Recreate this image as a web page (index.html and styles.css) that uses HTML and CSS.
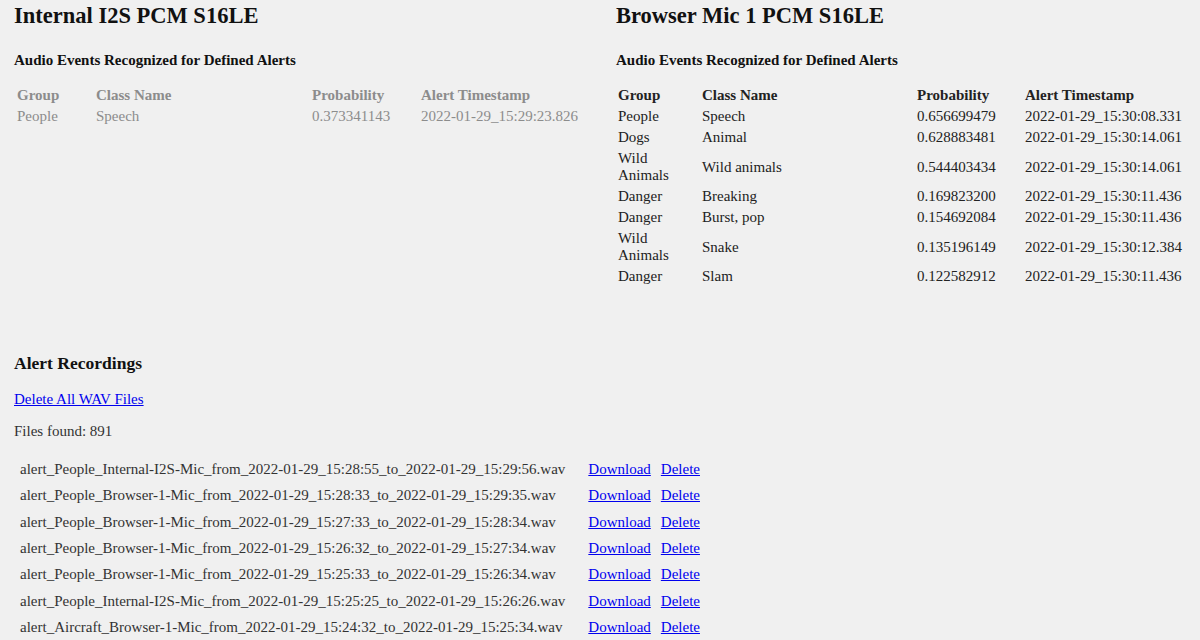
FILE: index.html
```html
<!DOCTYPE html>
<html lang="en">
<head>
<meta charset="utf-8">
<title>Audio Alerts</title>
<link rel="stylesheet" href="styles.css">
</head>
<body>
<div class="page">
  <div class="panels">
    <section class="panel panel-inactive">
      <h2 class="source-title">Internal I2S PCM S16LE</h2>
      <h4 class="section-title">Audio Events Recognized for Defined Alerts</h4>
      <table class="events events-left">
        <thead>
          <tr><th class="c-group">Group</th><th class="c-class">Class Name</th><th class="c-prob">Probability</th><th class="c-ts">Alert Timestamp</th></tr>
        </thead>
        <tbody>
          <tr><td>People</td><td>Speech</td><td>0.373341143</td><td>2022-01-29_15:29:23.826</td></tr>
        </tbody>
      </table>
    </section>
    <section class="panel">
      <h2 class="source-title">Browser Mic 1 PCM S16LE</h2>
      <h4 class="section-title">Audio Events Recognized for Defined Alerts</h4>
      <table class="events events-right">
        <thead>
          <tr><th class="c-group">Group</th><th class="c-class">Class Name</th><th class="c-prob">Probability</th><th class="c-ts">Alert Timestamp</th></tr>
        </thead>
        <tbody>
          <tr><td>People</td><td>Speech</td><td>0.656699479</td><td>2022-01-29_15:30:08.331</td></tr>
          <tr><td>Dogs</td><td>Animal</td><td>0.628883481</td><td>2022-01-29_15:30:14.061</td></tr>
          <tr><td>Wild Animals</td><td>Wild animals</td><td>0.544403434</td><td>2022-01-29_15:30:14.061</td></tr>
          <tr><td>Danger</td><td>Breaking</td><td>0.169823200</td><td>2022-01-29_15:30:11.436</td></tr>
          <tr><td>Danger</td><td>Burst, pop</td><td>0.154692084</td><td>2022-01-29_15:30:11.436</td></tr>
          <tr><td>Wild Animals</td><td>Snake</td><td>0.135196149</td><td>2022-01-29_15:30:12.384</td></tr>
          <tr><td>Danger</td><td>Slam</td><td>0.122582912</td><td>2022-01-29_15:30:11.436</td></tr>
        </tbody>
      </table>
    </section>
  </div>

  <section class="recordings">
    <h3 class="rec-title">Alert Recordings</h3>
    <p class="rec-line"><a href="#">Delete All WAV Files</a></p>
    <p class="rec-line rec-count">Files found: 891</p>
    <table class="files">
      <tbody>
        <tr><td class="f-name">alert_People_Internal-I2S-Mic_from_2022-01-29_15:28:55_to_2022-01-29_15:29:56.wav</td><td class="f-dl"><a href="#">Download</a></td><td class="f-del"><a href="#">Delete</a></td></tr>
        <tr><td class="f-name">alert_People_Browser-1-Mic_from_2022-01-29_15:28:33_to_2022-01-29_15:29:35.wav</td><td class="f-dl"><a href="#">Download</a></td><td class="f-del"><a href="#">Delete</a></td></tr>
        <tr><td class="f-name">alert_People_Browser-1-Mic_from_2022-01-29_15:27:33_to_2022-01-29_15:28:34.wav</td><td class="f-dl"><a href="#">Download</a></td><td class="f-del"><a href="#">Delete</a></td></tr>
        <tr><td class="f-name">alert_People_Browser-1-Mic_from_2022-01-29_15:26:32_to_2022-01-29_15:27:34.wav</td><td class="f-dl"><a href="#">Download</a></td><td class="f-del"><a href="#">Delete</a></td></tr>
        <tr><td class="f-name">alert_People_Browser-1-Mic_from_2022-01-29_15:25:33_to_2022-01-29_15:26:34.wav</td><td class="f-dl"><a href="#">Download</a></td><td class="f-del"><a href="#">Delete</a></td></tr>
        <tr><td class="f-name">alert_People_Internal-I2S-Mic_from_2022-01-29_15:25:25_to_2022-01-29_15:26:26.wav</td><td class="f-dl"><a href="#">Download</a></td><td class="f-del"><a href="#">Delete</a></td></tr>
        <tr><td class="f-name">alert_Aircraft_Browser-1-Mic_from_2022-01-29_15:24:32_to_2022-01-29_15:25:34.wav</td><td class="f-dl"><a href="#">Download</a></td><td class="f-del"><a href="#">Delete</a></td></tr>
      </tbody>
    </table>
  </section>
</div>
</body>
</html>
```

FILE: styles.css
```css
html {
  overflow: hidden;
}

body {
  margin: 0;
  background: #f0f0f0;
  font-family: "Liberation Serif", "Times New Roman", serif;
  font-size: 15px;
  color: #222;
}

.page {
  padding: 3px 0 0 14px;
}

.panels {
  display: grid;
  grid-template-columns: 602px 1fr;
}

.source-title {
  margin: 0;
  font-size: 22.5px;
  font-weight: bold;
  color: #111;
}

.section-title {
  margin: 23px 0 15px;
  font-size: 15px;
  font-weight: bold;
  color: #111;
}

.events {
  border-spacing: 2px;
}

.events-right {
  margin-left: -1px;
}

.events th,
.events td {
  padding: 1px;
  text-align: left;
  vertical-align: middle;
  box-sizing: border-box;
}

.events th {
  font-weight: bold;
}

.events-left .c-group { width: 77px; }
.events-left .c-class { width: 214px; }
.events-left .c-prob { width: 107px; }

.events-right .c-group { width: 82px; }
.events-right .c-class { width: 213px; }
.events-right .c-prob { width: 106px; }

.panel-inactive .events {
  color: #8c8c8c;
}

.recordings {
  margin-top: 65px;
}

.rec-title {
  margin: 0 0 17px;
  font-size: 17.55px;
  font-weight: bold;
  color: #111;
}

.rec-line {
  margin: 0 0 15px;
  color: #333;
}

.rec-count {
  margin-bottom: 16px;
}

a {
  color: #0000ee;
  text-decoration: underline;
}

.files {
  border-spacing: 0 1px;
  color: #333;
}

.files td {
  padding: 4.17px 0;
  white-space: nowrap;
}

.files .f-name {
  padding-left: 6px;
  padding-right: 23px;
}

.files .f-dl {
  padding-right: 10px;
}
```
